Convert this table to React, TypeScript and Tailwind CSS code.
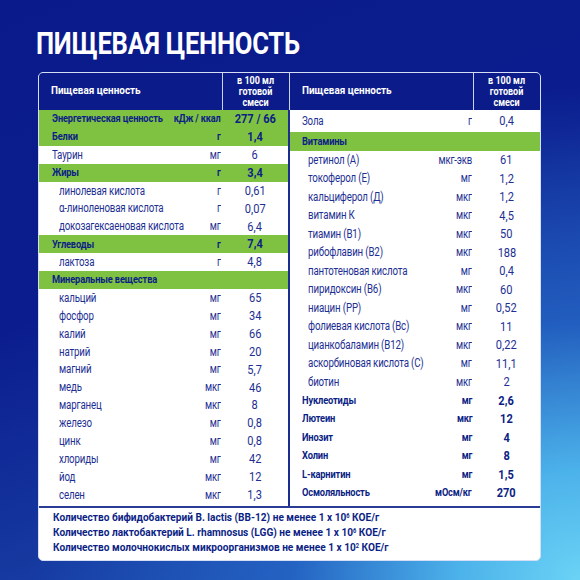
import React from "react";

type Row = { name: string; unit: string; value: string; kind: "group" | "plain" | "sub" | "bold" };

const left: Row[] = [
  { name: "Энергетическая ценность", unit: "кДж / ккал", value: "277 / 66", kind: "group" },
  { name: "Белки", unit: "г", value: "1,4", kind: "group" },
  { name: "Таурин", unit: "мг", value: "6", kind: "plain" },
  { name: "Жиры", unit: "г", value: "3,4", kind: "group" },
  { name: "линолевая кислота", unit: "г", value: "0,61", kind: "sub" },
  { name: "α-линоленовая кислота", unit: "г", value: "0,07", kind: "sub" },
  { name: "докозагексаеновая кислота", unit: "мг", value: "6,4", kind: "sub" },
  { name: "Углеводы", unit: "г", value: "7,4", kind: "group" },
  { name: "лактоза", unit: "г", value: "4,8", kind: "sub" },
  { name: "Минеральные вещества", unit: "", value: "", kind: "group" },
  { name: "кальций", unit: "мг", value: "65", kind: "sub" },
  { name: "фосфор", unit: "мг", value: "34", kind: "sub" },
  { name: "калий", unit: "мг", value: "66", kind: "sub" },
  { name: "натрий", unit: "мг", value: "20", kind: "sub" },
  { name: "магний", unit: "мг", value: "5,7", kind: "sub" },
  { name: "медь", unit: "мкг", value: "46", kind: "sub" },
  { name: "марганец", unit: "мкг", value: "8", kind: "sub" },
  { name: "железо", unit: "мг", value: "0,8", kind: "sub" },
  { name: "цинк", unit: "мг", value: "0,8", kind: "sub" },
  { name: "хлориды", unit: "мг", value: "42", kind: "sub" },
  { name: "йод", unit: "мкг", value: "12", kind: "sub" },
  { name: "селен", unit: "мкг", value: "1,3", kind: "sub" },
];

const right: Row[] = [
  { name: "Зола", unit: "г", value: "0,4", kind: "plain" },
  { name: "Витамины", unit: "", value: "", kind: "group" },
  { name: "ретинол (А)", unit: "мкг-экв", value: "61", kind: "sub" },
  { name: "токоферол (Е)", unit: "мг", value: "1,2", kind: "sub" },
  { name: "кальциферол (Д)", unit: "мкг", value: "1,2", kind: "sub" },
  { name: "витамин К", unit: "мкг", value: "4,5", kind: "sub" },
  { name: "тиамин (В1)", unit: "мкг", value: "50", kind: "sub" },
  { name: "рибофлавин (В2)", unit: "мкг", value: "188", kind: "sub" },
  { name: "пантотеновая кислота", unit: "мг", value: "0,4", kind: "sub" },
  { name: "пиридоксин (В6)", unit: "мкг", value: "60", kind: "sub" },
  { name: "ниацин (РР)", unit: "мг", value: "0,52", kind: "sub" },
  { name: "фолиевая кислота (Вс)", unit: "мкг", value: "11", kind: "sub" },
  { name: "цианкобаламин (В12)", unit: "мкг", value: "0,22", kind: "sub" },
  { name: "аскорбиновая кислота (С)", unit: "мг", value: "11,1", kind: "sub" },
  { name: "биотин", unit: "мкг", value: "2", kind: "sub" },
  { name: "Нуклеотиды", unit: "мг", value: "2,6", kind: "bold" },
  { name: "Лютеин", unit: "мкг", value: "12", kind: "bold" },
  { name: "Инозит", unit: "мг", value: "4", kind: "bold" },
  { name: "Холин", unit: "мг", value: "8", kind: "bold" },
  { name: "L-карнитин", unit: "мг", value: "1,5", kind: "bold" },
  { name: "Осмоляльность", unit: "мОсм/кг", value: "270", kind: "bold" },
];

const BOLD = "font-bold text-[#0d1f85] text-[11.5px] tracking-[-0.2px]";
const REG = "text-[#1d2f93] text-[12px] tracking-[-0.2px]";

function TableRow({ r, side }: { r: Row; side: "l" | "r" }) {
  const green = r.kind === "group";
  const bold = r.kind === "group" || r.kind === "bold";
  const cls = bold ? BOLD : REG;
  const h = side === "l" ? "h-[17.9px]" : r.name === "Зола" ? "h-[22px]" : "h-[18.5px]";
  const indent =
    side === "l"
      ? r.kind === "sub"
        ? "pl-[20px]"
        : "pl-[13px]"
      : r.kind === "sub"
      ? "pl-[18px]"
      : "pl-[12px]";
  return (
    <div className={`flex items-center ${h} ${green ? "bg-[#7fc242]" : ""}`}>
      <div className={`flex-1 min-w-0 whitespace-nowrap ${indent} ${cls}`}>
        <span className="inline-block origin-left scale-x-[0.81]">{r.name}</span>
      </div>
      <div className={`flex justify-end whitespace-nowrap pr-[1px] ${cls} ${bold ? "" : "text-[11.5px]"}`}>
        <span className="inline-block origin-right scale-x-[0.8]">{r.unit}</span>
      </div>
      <div
        className={`${side === "l" ? "w-[66px]" : "w-[67px]"} flex justify-center whitespace-nowrap ${
          bold ? "font-bold text-[#0d1f85]" : "text-[#1d2f93]"
        } text-[13px]`}
      >
        <span className="inline-block origin-center scale-x-[0.85]">{r.value}</span>
      </div>
    </div>
  );
}

function HeadVal() {
  return (
    <div className="flex flex-col items-center justify-center text-center text-white font-bold text-[10px] leading-[11px] border-l border-[#c9d4f2]">
      <span className="block scale-x-[0.9]">в 100 мл</span>
      <span className="block scale-x-[0.9]">готовой</span>
      <span className="block scale-x-[0.9]">смеси</span>
    </div>
  );
}

export default function App() {
  return (
    <div
      className="w-[580px] h-[580px] overflow-hidden bg-[radial-gradient(ellipse_95%_85%_at_100%_100%,#6ad3f5_0%,#4cb2ea_22%,rgba(40,112,205,0.7)_52%,rgba(28,78,180,0)_100%),linear-gradient(160deg,#0a1a8a_0%,#0b1d8e_42%,#15389f_72%,#1f4fb4_100%)]"
      style={{ fontFamily: "Roboto, 'Noto Sans', sans-serif" }}
    >
      <div className="pl-[36px] pt-[25px] h-[72px]">
        <h1 className="text-white font-bold text-[32px] leading-[36px] tracking-[-0.3px] origin-left scale-x-[0.8] whitespace-nowrap">
          ПИЩЕВАЯ ЦЕННОСТЬ
        </h1>
      </div>
      <div className="ml-[38px] w-[503px] rounded-[5px] border border-[#d5def5] bg-white overflow-hidden">
        <div className="grid grid-cols-[183px_67px_184px_67px] h-[37px] bg-[#0b1c8a]">
          <div className="flex items-center pl-[12px] text-white font-bold text-[11px]">
            <span className="inline-block origin-left scale-x-[0.9]">Пищевая ценность</span>
          </div>
          <HeadVal />
          <div className="flex items-center pl-[12px] text-white font-bold text-[11px] border-l border-[#c9d4f2]">
            <span className="inline-block origin-left scale-x-[0.9]">Пищевая ценность</span>
          </div>
          <HeadVal />
        </div>
        <div className="flex h-[396px]">
          <div className="w-[249px]">
            {left.map((r) => (
              <TableRow key={r.name} r={r} side="l" />
            ))}
          </div>
          <div className="w-[2px] bg-[#1b2d8f]" />
          <div className="w-[250px]">
            {right.map((r) => (
              <TableRow key={r.name} r={r} side="r" />
            ))}
          </div>
        </div>
        <div className="h-[2px] bg-[#2a3b96]" />
        <div className="pl-[14px] pt-[2px] pb-[5px] text-[#0d1f85] font-bold text-[11.5px] leading-[15px] whitespace-nowrap">
          <div className="origin-left scale-x-[0.88]">
            Количество бифидобактерий B. lactis (BB-12) не менее 1 x 10<sup className="text-[6.5px]">6</sup> КОЕ/г
          </div>
          <div className="origin-left scale-x-[0.88]">
            Количество лактобактерий L. rhamnosus (LGG) не менее 1 x 10<sup className="text-[6.5px]">6</sup> КОЕ/г
          </div>
          <div className="origin-left scale-x-[0.88]">
            Количество молочнокислых микроорганизмов не менее 1 x 10<sup className="text-[6.5px]">2</sup> КОЕ/г
          </div>
        </div>
      </div>
    </div>
  );
}
